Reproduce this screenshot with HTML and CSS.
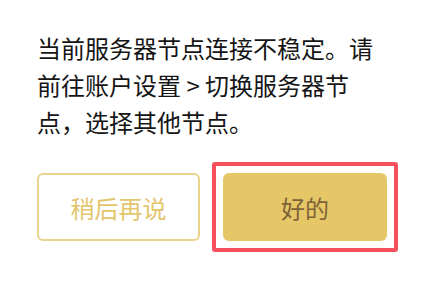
FILE: index.html
```html
<!DOCTYPE html>
<html lang="zh">
<head>
    <meta charset="UTF-8">
    <meta name="viewport" content="width=device-width, initial-scale=1.0">
    <title>节点提示</title>
    <link rel="stylesheet" href="styles.css">
</head>
<body>
    <div class="dialog">
        <p class="message">当前服务器节点连接不稳定。请前往账户设置 &gt; 切换服务器节点，选择其他节点。</p>
        <div class="actions">
            <button class="btn btn-later">稍后再说</button>
            <div class="focus">
                <button class="btn btn-ok">好的</button>
            </div>
        </div>
    </div>
</body>
</html>
```

FILE: styles.css
```css
html, body{
    height: 100%;
}
body{
    margin: 0;
    background-color: #fff;
    font-family: "Noto Sans CJK SC", "Noto Sans", sans-serif;
}
.dialog{
    width: 350px;
    padding: 29px 0 40px 37px;
}
.message{
    margin: 0;
    font-size: 24px;
    line-height: 37px;
    color: #151515;
}
.actions{
    display: grid;
    grid-template-columns: 163px 164px;
    column-gap: 23px;
    margin-top: 33px;
}
.btn{
    width: 100%;
    height: 68px;
    border-radius: 6px;
    font-family: inherit;
    font-size: 24px;
    padding: 0;
    cursor: pointer;
}
.btn-later{
    background-color: #fff;
    border: 2px solid #ead38a;
    color: #e3c56c;
}
.btn-ok{
    display: block;
    background-color: #e5c767;
    border: none;
    color: #7f6238;
}
.focus{
    position: relative;
    padding: 0;
}
.focus::after{
    content: "";
    position: absolute;
    top: -11px;
    left: -11px;
    right: -11px;
    bottom: -11px;
    border: 4px solid #f5515f;
    border-radius: 3px;
    pointer-events: none;
}
```
